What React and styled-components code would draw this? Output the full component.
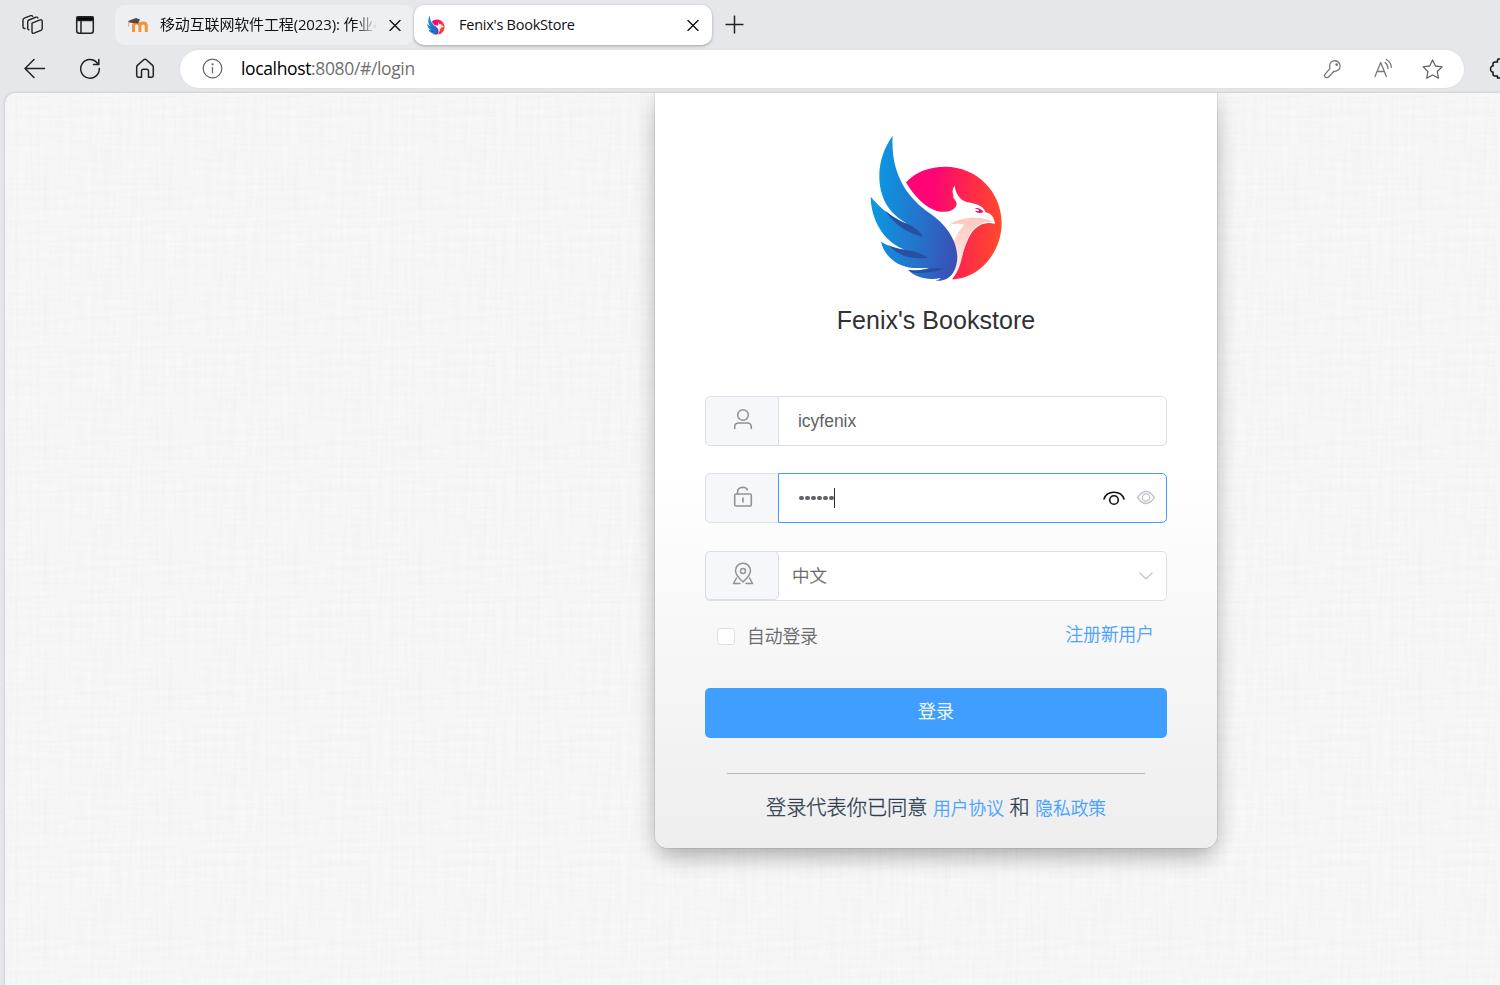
import React from "react";
import styled, { createGlobalStyle } from "styled-components";

const ui = '"Open Sans", "Noto Sans CJK SC", sans-serif';
const body = '"Liberation Sans", "Noto Sans CJK SC", sans-serif';

const Global = createGlobalStyle`
  *, *::before, *::after { box-sizing: border-box; }
  body { margin: 0; overflow: hidden; background: #e6e7eb; font-family: ${body}; }
`;

const Window = styled.div`
  display: flex;
  flex-direction: column;
  width: 1500px;
  height: 985px;
  overflow: hidden;
  background: #e6e7eb;
`;

const TabStrip = styled.div`
  display: flex;
  align-items: center;
  height: 50px;
  padding-left: 20px;
`;

const StripIcon = styled.div`
  display: flex;
  width: 26px;
  height: 26px;
  margin-right: ${(p) => p.$gap || 0}px;
`;

const Tab = styled.div`
  display: flex;
  align-items: center;
  width: ${(p) => (p.$active ? 298 : 299)}px;
  height: 40px;
  padding: 0 13px 0 ${(p) => (p.$active ? 11 : 12)}px;
  border-radius: 10px;
  font: 400 14.5px/40px ${ui};
  color: #111;
  background: ${(p) => (p.$active ? "#fff" : "#eeeff2")};
  box-shadow: ${(p) => (p.$active ? "0 1px 3px rgba(0, 0, 0, 0.3)" : "none")};
`;

const TabTitle = styled.span`
  width: ${(p) => p.$width}px;
  margin-left: ${(p) => p.$indent}px;
  margin-right: auto;
  margin-bottom: ${(p) => (p.$fade ? 2 : 0)}px;
  overflow: hidden;
  white-space: nowrap;
  letter-spacing: ${(p) => p.$spacing || 0}px;
  font-size: ${(p) => p.$size}px;
  mask-image: ${(p) => (p.$fade ? "linear-gradient(90deg, #000 90%, transparent)" : "none")};
`;

const Toolbar = styled.div`
  display: flex;
  align-items: center;
  height: 38px;
  padding-left: 22px;
  > * { flex-shrink: 0; }
`;

const NavIcon = styled.div`
  display: flex;
  width: 26px;
  height: 26px;
  margin-right: 29px;
`;

const AddressBar = styled.div`
  display: flex;
  align-items: center;
  width: 1284px;
  height: 38px;
  margin: 0 25px 0 -7px;
  padding: 0 19px 1px 20px;
  border-radius: 19px;
  background: #fff;
  box-shadow: 0 0 3px rgba(0, 0, 0, 0.06);
`;

const Url = styled.span`
  margin: 0 auto 1px 16px;
  font: 400 17.5px/36px ${ui};
  letter-spacing: -0.36px;
  color: #707070;
  b { font-weight: 400; color: #000; }
`;

const AddressIcon = styled.div`
  display: flex;
  margin-left: ${(p) => p.$gap}px;
`;

const Page = styled.main`
  position: relative;
  flex: 1;
  margin: 5px 0 0 5px;
  padding-left: 650px;
  overflow: hidden;
  border-radius: 10px 0 0 0;
  background: #f8f8f8;
  box-shadow: 0 0 3px rgba(0, 0, 20, 0.2);
`;

const Linen = styled.svg`
  position: absolute;
  inset: 0;
  width: 100%;
  height: 100%;
`;

const Card = styled.section`
  position: relative;
  display: flex;
  flex-direction: column;
  align-items: center;
  width: 562px;
  height: 755px;
  padding: 32px 50px 0;
  border-radius: 0 0 13px 13px;
  background: linear-gradient(#fff 0%, #fff 50%, #eee 100%);
  box-shadow: 0 0 0 1px rgba(0, 0, 0, 0.07), 0 13px 22px -4px rgba(0, 0, 0, 0.24), 0 0 25px rgba(0, 0, 0, 0.11);
`;

const Emblem = styled.div`
  display: flex;
  height: 165px;
  padding-left: 2px;
`;

const Title = styled.h1`
  margin: 14px 0 59px;
  font: 400 25px/33px ${body};
  letter-spacing: 0.03px;
  color: #303133;
`;

const Field = styled.div`
  display: flex;
  width: 462px;
  height: 50px;
  margin-bottom: ${(p) => p.$after}px;
`;

const Prefix = styled.div`
  display: flex;
  align-items: center;
  justify-content: center;
  width: 74px;
  height: ${(p) => (p.$rounded ? 49 : 50)}px;
  padding: 0 0 4px 1px;
  border: 1px solid #dcdfe6;
  border-radius: ${(p) => (p.$rounded ? "5px" : "5px 0 0 5px")};
  background: #f5f7fa;
`;

const Control = styled.div`
  display: flex;
  flex: 1;
  align-items: center;
  margin-left: -1px;
  padding: 0 11px 0 ${(p) => p.$inset}px;
  border: 1px solid ${(p) => (p.$focused ? "#409eff" : "#dcdfe6")};
  border-radius: 0 5px 5px 0;
  background: #fff;
  font: 400 17.5px/48px ${body};
  color: #606266;
`;

const SelectBox = styled(Field)`
  border: 1px solid #dcdfe6;
  border-radius: 5px;
  background: #fff;
  ${Prefix} { margin: -1px 0 0 -1px; }
  ${Control} { margin: 0; border: 0; font-weight: 300; -webkit-text-stroke: 0.3px; }
`;

const Value = styled.span`
  margin-right: auto;
  letter-spacing: ${(p) => p.$spacing || 0}px;
`;

const Dots = styled.span`
  display: flex;
  gap: 1.3px;
  align-items: center;
  height: 20px;
  margin-right: auto;
  padding-left: 1px;
  border-right: 1px solid #303133;
  i { width: 4.8px; height: 4.8px; border-radius: 50%; background: #606266; }
`;

const Options = styled.div`
  display: flex;
  justify-content: space-between;
  width: 462px;
  height: 35px;
  padding: 0 13px 0 12px;
  font: 300 17.7px/36px ${body};
  -webkit-text-stroke: 0.3px;
  color: #606266;
`;

const Remember = styled.label`
  display: flex;
  align-items: center;
  gap: 12px;
  height: 35px;
`;

const Box = styled.span`
  width: 18px;
  height: 17px;
  border: 1px solid #dcdfe6;
  border-radius: 3px;
  background: #fff;
`;

const Link = styled.a`
  color: #409eff;
  font-weight: 300;
  font-size: 17.7px;
`;

const Register = styled(Link)`
  line-height: 32px;
`;

const Submit = styled.button`
  width: 462px;
  height: 50px;
  margin: 34px 0 35px;
  padding: 0 0 3px;
  border: 0;
  border-radius: 5px;
  background: #409eff;
  color: #fff;
  font: 300 17.9px/46px ${body};
  -webkit-text-stroke: 0.3px;
`;

const Rule = styled.hr`
  width: 418px;
  height: 1px;
  margin: 0 0 19px;
  border: 0;
  background: #b8b9bb;
`;

const Agreement = styled.p`
  margin: 0;
  font: 300 20.2px/30px ${body};
  -webkit-text-stroke: 0.3px;
  color: #2c3e50;
  white-space: nowrap;
`;

const Line = ({ size = 26, box = 26, color = "#222", width = 1.5, children }) => (
  <svg width={size} height={size} viewBox={`0 0 ${box} ${box}`} fill="none" stroke={color} strokeWidth={width} strokeLinecap="round" strokeLinejoin="round">
    {children}
  </svg>
);

const Close = () => (
  <Line size={12} box={12} color="#111" width={1.4}><path d="M1 1.500l10 10M11 1.500L1 11.500" /></Line>
);

const Phoenix = ({ size, id }) => (
  <svg width={size} height={size} viewBox="0 0 495 495">
    <defs>
      <linearGradient id={`${id}-wing`} gradientUnits="userSpaceOnUse" x1="55" y1="280" x2="310" y2="310">
        <stop offset="0" stopColor="#0d96e2" />
        <stop offset="0.5" stopColor="#2277cd" />
        <stop offset="1" stopColor="#3b4fb6" />
      </linearGradient>
      <linearGradient id={`${id}-sun`} gradientUnits="userSpaceOnUse" x1="155" y1="260" x2="440" y2="290">
        <stop offset="0.25" stopColor="#fe0474" />
        <stop offset="0.65" stopColor="#ff2a49" />
        <stop offset="1" stopColor="#ff4b2b" />
      </linearGradient>
      <linearGradient id={`${id}-neck`} x1="0" y1="0" x2="0" y2="1">
        <stop offset="0" stopColor="#fdc8bf" />
        <stop offset="1" stopColor="#fff0ec" />
      </linearGradient>
    </defs>
    <path fill={`url(#${id}-sun)`} d="M153 172C182 140 224 125 271 125C365 125 440 200 440 294C440 388 366 463 291 463C314 436 317 391 337 348C350 313 379 284 420 297C418 277 408 264 391 262C388 242 355 234 337 232C315 225 302 207 299 182C292 191 291 202 296 212C288 216 305 224 305 239C298 260 270 264 245 258C207 246 175 210 153 172Z" />
    <path fill={`url(#${id}-neck)`} d="M285 298C313 278 374 270 417 291C375 286 349 309 337 343C319 389 321 427 294 458C308 426 307 377 296 349C306 327 318 309 328 299C314 295 300 296 285 298Z" />
    <path fill="#e9106a" d="M358 251C367 247 377 250 386 261C376 265 365 265 360 257L370 259L373 255C368 252 363 251 358 251Z" />
    <path fill={`url(#${id}-wing)`} d="M113 32C76 82 62 151 82 211C94 250 122 277 157 297C116 283 76 250 47 215C48 284 85 349 149 374C123 371 100 363 78 350C86 391 126 426 174 429L222 430C202 437 181 437 160 435C179 457 218 467 258 459C253 464 248 466 241 467C284 472 306 439 307 396C306 343 271 297 223 264C158 219 106 148 113 32Z" />
    <path fill="#294fa2" d="M91 257C120 281 145 292 157 297C180 306 194 319 204 335C158 326 118 298 91 257ZM102 361C133 378 170 374 190 383C202 388 211 393 219 398C175 405 129 394 102 361ZM160 435C199 441 231 424 267 431C240 441 194 447 170 442Z" />
  </svg>
);

const Background = () => (
  <Linen>
    <defs>
      <filter id="warp" x="0" y="0" width="100%" height="100%" colorInterpolationFilters="sRGB">
        <feTurbulence type="fractalNoise" baseFrequency="0.28 0.016" numOctaves="2" seed="4" stitchTiles="stitch" />
        <feColorMatrix values="0 0 0 0 0  0 0 0 0 0  0 0 0 0 0  0.028 0 0 0 -0.009" />
      </filter>
      <filter id="weft" x="0" y="0" width="100%" height="100%" colorInterpolationFilters="sRGB">
        <feTurbulence type="fractalNoise" baseFrequency="0.016 0.28" numOctaves="2" seed="9" stitchTiles="stitch" />
        <feColorMatrix values="0 0 0 0 0  0 0 0 0 0  0 0 0 0 0  0.028 0 0 0 -0.009" />
      </filter>
      <pattern id="linen" width="125" height="125" patternUnits="userSpaceOnUse">
        <rect width="125" height="125" filter="url(#warp)" />
        <rect width="125" height="125" filter="url(#weft)" />
      </pattern>
    </defs>
    <rect width="100%" height="100%" fill="url(#linen)" />
  </Linen>
);

export default function App() {
  return (
    <Window>
      <Global />
      <TabStrip>
        <StripIcon $gap={26}>
          <Line width={1.4}>
            <path d="M12 11.2l8.2-3.3q2-.5 2 1.5v7.2q0 1.3-1.2 1.8l-7 2.8q-2 .6-2-1.4z" />
            <path d="M9 17.8q-1.3 0-1.3-1.6V9.800q0-1.300 1.300-1.800l7-2.800q1.300-.4 1.900.8" />
            <path d="M5 16.500q-2 0-2-1.800V8q0-1.300 1.300-1.800l6.500-2.500q1.300-.4 2 .6" />
          </Line>
        </StripIcon>
        <StripIcon $gap={17}>
          <Line width={1.5}>
            <rect x="4.700" y="4.700" width="16.600" height="16.600" rx="2.500" />
            <path d="M5 5h16v3.500H5z" fill="#000" />
            <path d="M9 9v12" />
          </Line>
        </StripIcon>
        <Tab>
          <svg width="21" height="18" viewBox="0 0 21 18">
            <path d="M6.500 16V10q0-3 3.200-3t3.200 3V16M12.900 16V10q0-3 3.200-3t3.200 3V16" fill="none" stroke="#f59231" strokeWidth="2.900" />
            <path d="M1 5l8-3 4 1.500-2 4-5-.5-4-.5z" fill="#4b4b4d" />
            <path d="M2 5.500l-.5 5" stroke="#d9a778" />
          </svg>
          <TabTitle $width={217} $indent={12} $size={15} $spacing={-0.15} $fade>移动互联网软件工程(2023): 作业4</TabTitle>
          <Close />
        </Tab>
        <Tab $active>
          <Phoenix size={22} id="favicon" />
          <TabTitle $width={140} $indent={12} $size={14.5} $spacing={-0.25}>Fenix's BookStore</TabTitle>
          <Close />
        </Tab>
        <svg width="46" height="26" viewBox="0 0 46 26"><path d="M13.500 12.500h18M22.500 3.500v18" stroke="#222" strokeWidth="1.500" /></svg>
      </TabStrip>
      <Toolbar>
        <NavIcon><Line><path d="M22.500 12.500H3.500M12 3.500l-9 9 9 9" /></Line></NavIcon>
        <NavIcon><Line><path d="M22.300 12.500A9.300 9.300 0 1 1 19.800 6.500L21.500 8.500M21.800 3.500v5h-5.300" /></Line></NavIcon>
        <NavIcon><Line><path d="M4.700 11q0-1 .7-1.600l6.300-5.700q1.300-1 2.600 0l6.300 5.700q.7.600.7 1.600v8.500q0 1.700-1.500 1.700h-3.300v-6q0-2-2-2h-3q-2 0-2 2v6H6.200q-1.500 0-1.500-1.700z" /></Line></NavIcon>
        <AddressBar>
          <Line size={25} color="#666" width={1.300}>
            <circle cx="13" cy="13" r="9.700" /><path d="M13 12v5.500" /><circle cx="13" cy="8.700" r=".5" fill="#666" />
          </Line>
          <Url><b>localhost</b>:8080/#/login</Url>
          <AddressIcon $gap={0}>
            <Line size={24} box={24} color="#777" width={1.300}>
              <path d="M10 11.300A5.300 5.300 0 1 1 13.900 14.300L9.300 19.300Q7.800 21 5.800 20.500Q3.600 19.500 5 17.300Z" />
              <circle cx="16.700" cy="7.700" r=".7" fill="#777" />
            </Line>
          </AddressIcon>
          <AddressIcon $gap={27}>
            <Line size={24} box={24} color="#777" width={1.300}>
              <path d="M4 19.500L9.700 5.500l5.600 14M6 14.500h7.500M14 5.500q3 2 3 6M15.300 2.500q5 3 5 8" />
            </Line>
          </AddressIcon>
          <AddressIcon $gap={26}>
            <Line size={24} box={24} color="#666" width={1.300}>
              <path d="M11.600 3l2.900 6 6.600.9-4.800 4.600 1.200 6.600L11.600 18l-5.900 3.100 1.200-6.600-4.800-4.600 6.600-.9z" />
            </Line>
          </AddressIcon>
        </AddressBar>
        <Line color="#111"><path d="M13 3H9.500q-1 0-1 1v2H6Q4 6 4 8v2H3q-1.500 1-1.500 3T3 16h1v2q0 2 2 2h2.500v2H13" /></Line>
      </Toolbar>
      <Page>
        <Background />
        <Card>
          <Emblem><Phoenix size={165} id="logo" /></Emblem>
          <Title>Fenix's Bookstore</Title>
          <Field $after={27}>
            <Prefix>
              <Line size={24} box={24} color="#909399" width={1.600}><circle cx="12" cy="8" r="5.300" /><path d="M3.700 21.500v-1.500q0-4 4-4h8.600q4 0 4 4V21.500" /></Line>
            </Prefix>
            <Control $inset={19}><Value $spacing={-0.02}>icyfenix</Value></Control>
          </Field>
          <Field $after={28}>
            <Prefix>
              <Line size={24} box={24} color="#909399" width={1.600}><rect x="3.700" y="10" width="16.600" height="12" rx="1.500" /><path d="M6.500 9.800V8.500q0-5 5.200-5.300 3.500 0 4.800 2.700M12 14v4" /></Line>
            </Prefix>
            <Control $inset={19} $focused>
              <Dots><i /><i /><i /><i /><i /><i /></Dots>
              <Line size={22} box={22} color="#111" width={1.600}><path d="M1 12C4 3 18 3 21 12" /><circle cx="11" cy="13" r="4.300" /></Line>
              <svg width="30" height="20" viewBox="0 0 30 20" fill="none" stroke="#c0c4cc" strokeWidth="1.300">
                <path d="M12.500 9.500Q21 -2.500 29.500 9.500Q21 21.500 12.500 9.500Z" /><circle cx="21" cy="9.500" r="3.700" />
              </svg>
            </Control>
          </Field>
          <SelectBox $after={18}>
            <Prefix $rounded>
              <Line size={24} box={24} color="#909399" width={1.500}><path d="M12 20Q4.500 13 4.500 8.700a7.500 7.500 0 0 1 15 0Q19.500 13 12 20zM5.500 16l-3 5.500H9M18.500 16l3 5.500H15" /><circle cx="12" cy="9" r="2.500" /></Line>
            </Prefix>
            <Control $inset={13}>
              <Value>中文</Value>
              <Line size={18} box={18} color="#c0c4cc" width={1.300}><path d="M3 6l6 6 6-6" /></Line>
            </Control>
          </SelectBox>
          <Options>
            <Remember><Box />自动登录</Remember>
            <Register>注册新用户</Register>
          </Options>
          <Submit>登录</Submit>
          <Rule />
          <Agreement>登录代表你已同意 <Link>用户协议</Link> 和 <Link>隐私政策</Link></Agreement>
        </Card>
      </Page>
    </Window>
  );
}
